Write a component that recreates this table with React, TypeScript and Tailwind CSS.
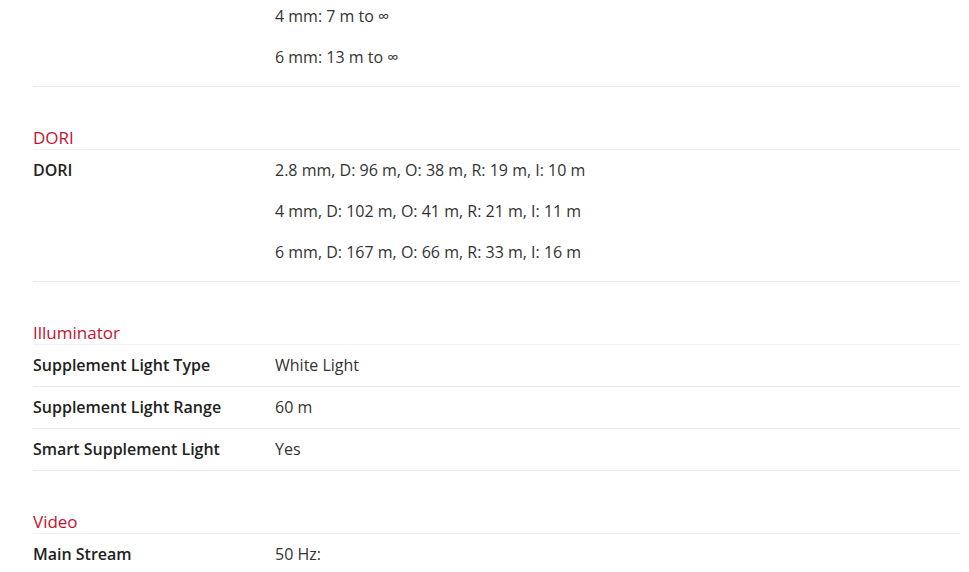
import React from 'react';

type Row = { label: string; values: string[] };
type Section = { title?: string; rows: Row[] };

const sections: Section[] = [
  {
    rows: [{ label: '', values: ['4 mm: 7 m to ∞', '6 mm: 13 m to ∞'] }],
  },
  {
    title: 'DORI',
    rows: [
      {
        label: 'DORI',
        values: [
          '2.8 mm, D: 96 m, O: 38 m, R: 19 m, I: 10 m',
          '4 mm, D: 102 m, O: 41 m, R: 21 m, I: 11 m',
          '6 mm, D: 167 m, O: 66 m, R: 33 m, I: 16 m',
        ],
      },
    ],
  },
  {
    title: 'Illuminator',
    rows: [
      { label: 'Supplement Light Type', values: ['White Light'] },
      { label: 'Supplement Light Range', values: ['60 m'] },
      { label: 'Smart Supplement Light', values: ['Yes'] },
    ],
  },
  {
    title: 'Video',
    rows: [{ label: 'Main Stream', values: ['50 Hz:'] }],
  },
];

const SpecRow: React.FC<{ row: Row; first?: boolean }> = ({ row, first }) => {
  const multi = row.values.length > 1;
  return (
    <div
      className={`flex border-b border-[#e8e8e8] ${
        multi ? (first ? 'pt-[6px] pb-[18px]' : 'pt-[10px] pb-[18px]') : 'pt-[10px] pb-[10px]'
      }`}
    >
      <div className="w-[242px] shrink-0 font-semibold text-[#222]">{row.label}</div>
      <div className="flex flex-col gap-[20px] text-[#333]">
        {row.values.map((v) => (
          <div key={v}>{v}</div>
        ))}
      </div>
    </div>
  );
};

export default function App() {
  return (
    <div
      className="min-h-screen bg-white pl-[33px] pr-[9px] text-[16px] leading-[21px]"
      style={{ fontFamily: '"Open Sans", "Noto Sans", sans-serif' }}
    >
      {sections.map((s, i) => (
        <div key={i} className={s.title ? 'mt-[40px]' : ''}>
          {s.title && (
            <div className="border-b border-[#f1f1f1] pb-[1px] text-[17px] text-[#c41230]">{s.title}</div>
          )}
          {s.rows.map((r, j) => (
            <SpecRow key={j} row={r} first={!s.title} />
          ))}
        </div>
      ))}
    </div>
  );
}
